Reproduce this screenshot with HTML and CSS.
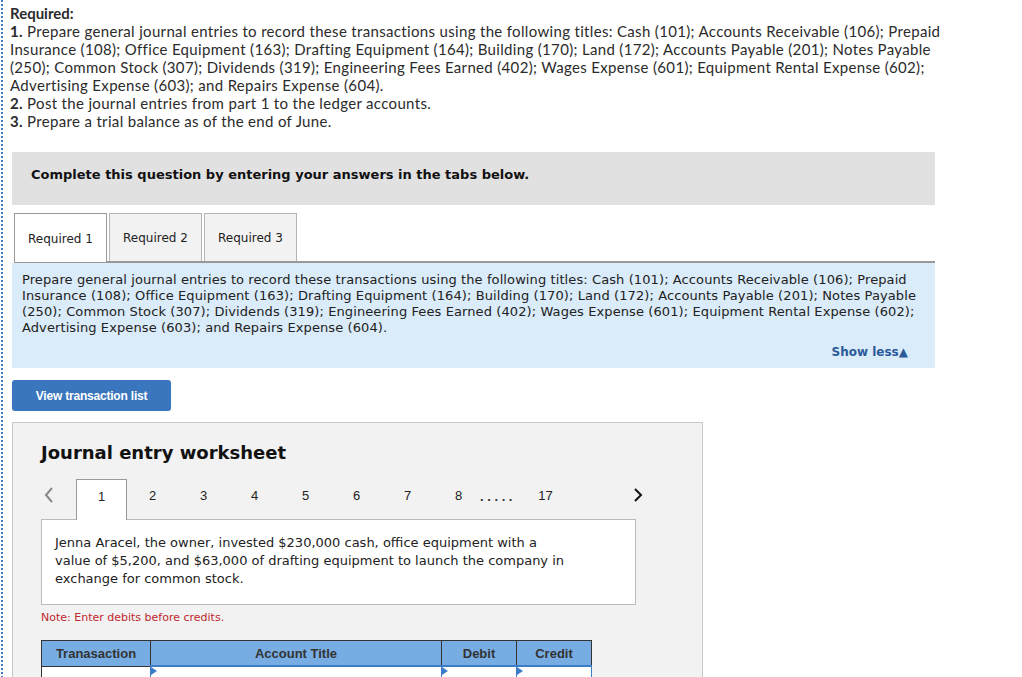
FILE: index.html
```html
<!DOCTYPE html>
<html>
<head>
<meta charset="utf-8">
<link rel="stylesheet" href="styles.css">
</head>
<body>
<div class="page">
  <div class="required">
    <div class="req-title">Required:</div>
    <div><b>1.</b> Prepare general journal entries to record these transactions using the following titles: Cash (101); Accounts Receivable (106); Prepaid<br>Insurance (108); Office Equipment (163); Drafting Equipment (164); Building (170); Land (172); Accounts Payable (201); Notes Payable<br>(250); Common Stock (307); Dividends (319); Engineering Fees Earned (402); Wages Expense (601); Equipment Rental Expense (602);<br>Advertising Expense (603); and Repairs Expense (604).</div>
    <div><b>2.</b> Post the journal entries from part 1 to the ledger accounts.</div>
    <div><b>3.</b> Prepare a trial balance as of the end of June.</div>
  </div>

  <div class="question">
    <div class="complete">Complete this question by entering your answers in the tabs below.</div>

    <div class="tabs">
      <div class="tab active">Required 1</div>
      <div class="tab">Required 2</div>
      <div class="tab">Required 3</div>
    </div>

    <div class="info">
      <div class="info-text">Prepare general journal entries to record these transactions using the following titles: Cash (101); Accounts Receivable (106); Prepaid<br>Insurance (108); Office Equipment (163); Drafting Equipment (164); Building (170); Land (172); Accounts Payable (201); Notes Payable<br>(250); Common Stock (307); Dividends (319); Engineering Fees Earned (402); Wages Expense (601); Equipment Rental Expense (602);<br>Advertising Expense (603); and Repairs Expense (604).</div>
      <div class="show-less">Show less&#9650;</div>
    </div>

    <button class="view-btn">View transaction list</button>

    <div class="worksheet">
      <div class="ws-title">Journal entry worksheet</div>
      <div class="nav">
        <div class="nav-prev"><svg width="10" height="16" viewBox="0 0 10 16"><path d="M8 1 L2 8 L8 15" fill="none" stroke="#8a8a8a" stroke-width="2"/></svg></div>
        <div class="num active">1</div>
        <div class="num">2</div>
        <div class="num">3</div>
        <div class="num">4</div>
        <div class="num">5</div>
        <div class="num">6</div>
        <div class="num">7</div>
        <div class="num">8</div>
        <div class="dots">.....</div>
        <div class="num">17</div>
        <div class="nav-next"><svg width="10" height="16" viewBox="0 0 10 16"><path d="M2 2 L8 8 L2 14" fill="none" stroke="#111" stroke-width="2"/></svg></div>
      </div>
      <div class="desc">Jenna Aracel, the owner, invested $230,000 cash, office equipment with a<br>value of $5,200, and $63,000 of drafting equipment to launch the company in<br>exchange for common stock.</div>
      <div class="note">Note: Enter debits before credits.</div>
      <table class="entry">
        <thead>
          <tr>
            <th class="c-tr">Tranasaction</th>
            <th class="c-acc">Account Title</th>
            <th class="c-amt">Debit</th>
            <th class="c-amt">Credit</th>
          </tr>
        </thead>
        <tbody>
          <tr>
            <td class="c-tr">1</td>
            <td class="inp"><span class="mark"></span></td>
            <td class="inp"><span class="mark"></span></td>
            <td class="inp"><span class="mark"></span></td>
          </tr>
        </tbody>
      </table>
    </div>
  </div>
</div>
</body>
</html>
```
FILE: styles.css
```css
html, body {
  margin: 0;
  padding: 0;
  background: #fff;
  overflow: hidden;
}
.page {
  margin-left: 1px;
  border-left: 2px dotted #3d7cc9;
  min-height: 677px;
  padding-top: 4px;
}
.required {
  padding-left: 7px;
  font-family: Lato, "Open Sans", sans-serif;
  font-size: 15px;
  letter-spacing: 0.33px;
  line-height: 18px;
  color: #2b2b2b;
}
.req-title {
  font-weight: bold;
  letter-spacing: 0;
}
.required b {
  font-weight: bold;
}
.question {
  margin-left: 9px;
  width: 923px;
  margin-top: 22px;
  font-family: "DejaVu Sans", Verdana, sans-serif;
  color: #222;
}
.complete {
  background: #e1e1e1;
  height: 53px;
  box-sizing: border-box;
  display: flex;
  align-items: center;
  padding-left: 19px;
  padding-bottom: 9px;
  font-weight: bold;
  font-size: 13px;
  color: #111;
}
.tabs {
  display: flex;
  margin-top: 8px;
  margin-left: 2px;
  gap: 2px;
  border-bottom: 2px solid #999;
}
.tab {
  width: 91px;
  height: 46px;
  border: 1px solid #b5b5b5;
  border-bottom: none;
  background: #f2f2f2;
  font-size: 12px;
  display: flex;
  align-items: center;
  justify-content: center;
  padding-top: 1px;
  box-sizing: content-box;
  color: #222;
}
.tab.active {
  background: #fff;
  border-color: #999;
  margin-bottom: -2px;
  height: 47px;
}
.info {
  background: #daebf9;
  padding: 9px 27px 8px 10px;
  font-size: 13px;
  line-height: 16px;
  color: #222;
}
.info-text {
  white-space: nowrap;
  letter-spacing: 0.1px;
}
.show-less {
  margin-top: 8px;
  text-align: right;
  font-weight: bold;
  font-size: 12px;
  color: #2a5a9a;
}
.view-btn {
  display: block;
  margin-top: 12px;
  width: 159px;
  height: 31px;
  border: none;
  border-radius: 3px;
  background: #3a76bd;
  color: #fff;
  font-family: "Liberation Sans", Arial, sans-serif;
  font-weight: bold;
  font-size: 12px;
  letter-spacing: -0.2px;
  padding: 0;
}
.worksheet {
  margin-top: 11px;
  width: 661px;
  background: #f2f2f2;
  border: 1px solid #c8c8c8;
  padding: 18px 0 20px 28px;
}
.ws-title {
  font-weight: bold;
  font-size: 18px;
  line-height: 24px;
  color: #111;
}
.nav {
  display: flex;
  align-items: stretch;
  margin-top: 14px;
  height: 40px;
  font-family: "Liberation Sans", Arial, sans-serif;
  font-size: 13px;
  color: #222;
}
.nav-prev {
  width: 35px;
  display: flex;
  align-items: center;
  padding-left: 3px;
  box-sizing: border-box;
  padding-bottom: 8px;
}
.num {
  width: 51px;
  display: flex;
  align-items: center;
  justify-content: center;
  box-sizing: border-box;
  padding-bottom: 8px;
}
.num.active {
  background: #fff;
  border: 1px solid #999;
  border-bottom: none;
  height: 41px;
  position: relative;
  z-index: 1;
  padding-bottom: 7px;
}
.dots {
  width: 40px;
  margin-left: -4px;
  display: flex;
  align-items: center;
  justify-content: flex-start;
  font-weight: bold;
  letter-spacing: 3.6px;
  padding-bottom: 6px;
  box-sizing: border-box;
  color: #333;
}
.nav-next {
  margin-left: 62px;
  display: flex;
  align-items: center;
  padding-bottom: 8px;
}
.desc {
  width: 595px;
  box-sizing: border-box;
  background: #fff;
  border: 1px solid #bbb;
  padding: 14px 13px 0 13px;
  height: 86px;
  font-size: 13px;
  line-height: 18px;
  color: #222;
}
.note {
  margin-top: 6px;
  font-size: 11px;
  line-height: 14px;
  color: #c0282d;
}
.entry {
  margin-top: 15px;
  border-collapse: collapse;
  font-family: "Liberation Sans", Arial, sans-serif;
  font-size: 13px;
}
.entry th {
  background: #78ade3;
  color: #333;
  font-weight: bold;
  height: 24px;
  padding: 0;
  border: 1px solid #333;
  text-align: center;
}
.c-tr { width: 108px; }
.c-acc { width: 290px; }
.c-amt { width: 74px; }
.entry td {
  background: #fff;
  height: 34px;
  padding: 0;
    vertical-align: top;
  text-align: center;
  font-size: 13px;
  color: #333;
}
.entry td.c-tr {
  padding-top: 8px;
  border-left: 1px solid #333;
}
.entry td.inp {
  border-left: 1px solid #3d7cc9;
  border-right: 1px solid #3d7cc9;
  border-top: 2px solid #3d7cc9;
  position: relative;
}
.mark {
  position: absolute;
  left: 0;
  top: 0;
  width: 0;
  height: 0;
  border-top: 4px solid transparent;
  border-bottom: 4px solid transparent;
  border-left: 6px solid #3d7cc9;
}
```
